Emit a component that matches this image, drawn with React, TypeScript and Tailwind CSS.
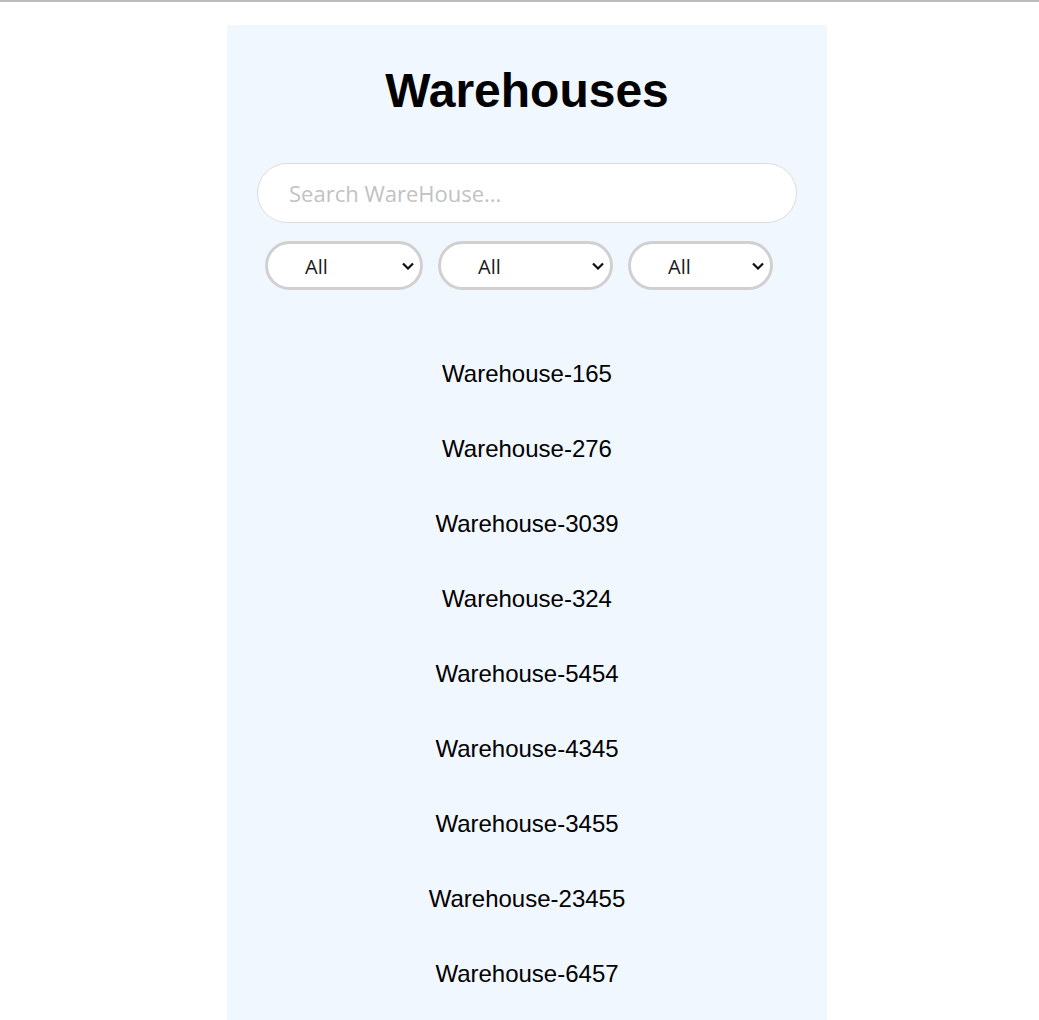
const warehouses = [
  'Warehouse-165',
  'Warehouse-276',
  'Warehouse-3039',
  'Warehouse-324',
  'Warehouse-5454',
  'Warehouse-4345',
  'Warehouse-3455',
  'Warehouse-23455',
  'Warehouse-6457'
]

const Chevron = () => (
  <svg
    className="pointer-events-none absolute right-[9px] top-1/2 -translate-y-1/2"
    width="12"
    height="8"
    viewBox="0 0 12 8"
    fill="none"
  >
    <path d="M1 1.5l5 5 5-5" stroke="#111" strokeWidth="2.2" />
  </svg>
)

const Filter = ({ width }: { width: string }) => (
  <div className={`relative ${width}`}>
    <select className="h-[49px] w-full appearance-none rounded-full border-[3px] border-[#d0d0d0] bg-white pt-[2px] pl-[37px] font-['Open_Sans',sans-serif] text-[20px] text-[#1a1a1a] outline-none">
      <option>All</option>
    </select>
    <Chevron />
  </div>
)

const App = () => {
  return (
    <div className="min-h-[1020px] bg-white">
      <div className="h-[2px] bg-[#bdbdbd]"></div>
      <div className="ml-[227px] mt-[23px] w-[600px] bg-[#f0f7ff] px-[30px] pt-[38px] pb-[20px] font-['Liberation_Sans',Arial,sans-serif]">
        <h1 className="text-center text-[48px] font-bold leading-[55px] text-black">
          Warehouses
        </h1>
        <input
          type="text"
          placeholder="Search WareHouse..."
          className="mt-[45px] h-[60px] w-full rounded-full border border-[#dcdcdc] bg-white px-[31px] font-['Open_Sans',sans-serif] text-[22px] outline-none placeholder:text-[#c2c2c2]"
        />
        <div className="mt-[18px] flex gap-[15px] pl-[8px]">
          <Filter width="w-[158px]" />
          <Filter width="w-[175px]" />
          <Filter width="w-[145px]" />
        </div>
        <div className="mt-[46px] flex flex-col">
          {warehouses.map((name) => (
            <div
              key={name}
              className="py-[24px] text-center text-[24px] leading-[27px] text-black"
            >
              {name}
            </div>
          ))}
        </div>
      </div>
    </div>
  )
}

export default App
